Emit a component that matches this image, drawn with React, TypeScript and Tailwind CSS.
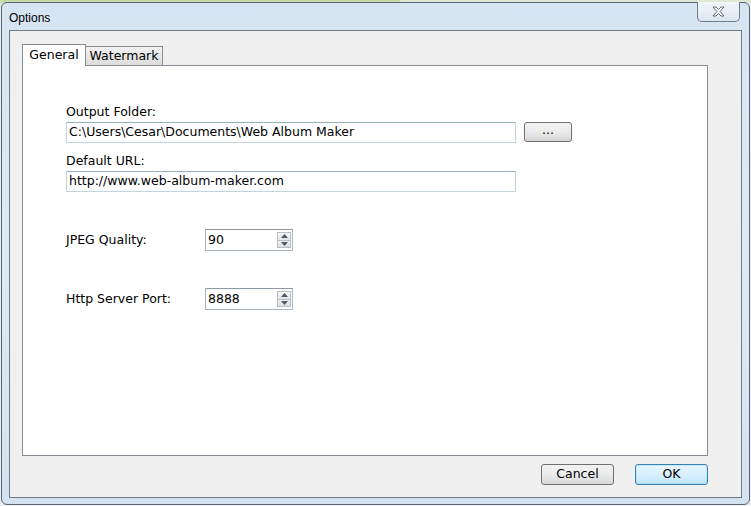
// Options dialog: General tab with folder, URL and two spin fields
const body = "font-['DejaVu_Sans',Tahoma,sans-serif] text-[12.5px] text-black";

function TextBox({ value }: { value: string }) {
  return (
    <div className="w-[450px] h-[21px] flex items-center pl-[2px] bg-white border border-[#c3d5da] border-t-[#98b0b6]">
      {value}
    </div>
  );
}

function Arrow({ up }: { up?: boolean }) {
  return (
    <svg width="7" height="4" viewBox="0 0 7 4">
      <path d={up ? "M0 4 L3.5 0 L7 4 Z" : "M0 0 L3.5 4 L7 0 Z"} fill="#4d5a66" />
    </svg>
  );
}

function SpinBox({ value }: { value: string }) {
  return (
    <div className="w-[88px] h-[22px] flex bg-white border border-[#a9b5bf] border-t-[#8d9aa6]">
      <div className="flex-1 flex items-center pl-[2px]">{value}</div>
      <div className="w-[14px] my-[2px] mr-[1px] flex flex-col border border-[#b6bfc7]">
        <div className="flex-1 flex items-center justify-center bg-gradient-to-b from-[#f7f7f7] to-[#e4e4e4] border-b border-[#b6bfc7]">
          <Arrow up />
        </div>
        <div className="flex-1 flex items-center justify-center bg-gradient-to-b from-[#f0f0f0] to-[#dedede]">
          <Arrow />
        </div>
      </div>
    </div>
  );
}

function CloseGlyph() {
  return (
    <svg width="13" height="11" viewBox="0 0 13 11">
      <path
        d="M1 1 H4 L6.5 3.5 L9 1 H12 L8 5.5 L12 10 H9 L6.5 7.5 L4 10 H1 L5 5.5 Z"
        fill="#ffffff"
        stroke="#5e6b78"
        strokeWidth="1"
        strokeLinejoin="round"
      />
    </svg>
  );
}

export default function App() {
  return (
    <div className="w-[751px] h-[506px] overflow-hidden bg-[#e9eef2] relative">
      {/* window behind the dialog peeking at the top edge */}
      <div className="h-[3px] bg-[#dfe8d2]" />
      <div className="absolute left-0 top-0 h-[9px] w-[400px] bg-gradient-to-b from-[#b4d28e] to-[#e3eed6] opacity-70" />

      <div className="absolute inset-x-[1px] top-[2px] bottom-[1px] rounded-[6px] border border-[#5a6673] bg-gradient-to-b from-[#d6e5f3] via-[#dfeaf5] to-[#d3e2f0] flex flex-col px-[7px] pb-[6px]">
        {/* title bar */}
        <div className="h-[27px] flex items-start relative">
          <span className="mt-[6px] font-['Liberation_Sans',Arial,sans-serif] text-[12px] text-black">
            Options
          </span>
          <div className="absolute right-[2px] -top-[1px] w-[43px] h-[20px] flex items-center justify-center rounded-b-[5px] border border-t-0 border-[#6f7c89] bg-gradient-to-b from-[#f2f6fa] to-[#dce7f1]">
            <CloseGlyph />
          </div>
        </div>

        {/* client area */}
        <div className={`flex-1 flex flex-col border border-[#6f7b87] bg-[#f0f0f0] pl-[12px] pr-[33px] pt-[13px] ${body}`}>
          {/* tabs */}
          <div className="flex items-end h-[22px] relative z-10">
            <div className="h-[22px] w-[64px] flex items-start justify-center pt-[1px] bg-white border border-b-0 border-[#898c95]">
              General
            </div>
            <div className="h-[19px] w-[78px] flex items-center justify-center -ml-[1px] mb-[1px] bg-gradient-to-b from-[#f2f2f2] to-[#dcdcdc] border border-b-0 border-[#898c95]">
              Watermark
            </div>
          </div>

          {/* tab page */}
          <div className="-mt-[1px] h-[391px] bg-white border border-[#898c95] pl-[43px] pt-[38px] flex flex-col">
            <div className="h-[15px] leading-[15px]">Output Folder:</div>
            <div className="mt-[3px] flex items-start">
              <TextBox value="C:\Users\Cesar\Documents\Web Album Maker" />
              <div className="ml-[8px] w-[48px] h-[20px] flex items-center justify-center rounded-[3px] border border-[#707070] bg-gradient-to-b from-[#f3f3f3] via-[#ebebeb] to-[#d6d6d6] pb-[3px]">
                ...
              </div>
            </div>
            <div className="mt-[10px] h-[15px] leading-[15px]">Default URL:</div>
            <div className="mt-[3px]">
              <TextBox value="http://www.web-album-maker.com" />
            </div>

            <div className="mt-[37px] flex items-center">
              <div className="w-[139px]">JPEG Quality:</div>
              <SpinBox value="90" />
            </div>
            <div className="mt-[37px] flex items-center">
              <div className="w-[139px]">Http Server Port:</div>
              <SpinBox value="8888" />
            </div>
          </div>

          {/* dialog buttons */}
          <div className="mt-[8px] flex justify-end gap-[21px]">
            <div className="w-[73px] h-[21px] flex items-center justify-center rounded-[3px] border border-[#707070] bg-gradient-to-b from-[#f2f2f2] via-[#ebebeb] to-[#d8d8d8]">
              Cancel
            </div>
            <div className="w-[73px] h-[21px] flex items-center justify-center rounded-[3px] border border-[#3c7fb1] bg-gradient-to-b from-[#eaf6fd] via-[#d9f0fc] to-[#bee6fd] shadow-[inset_0_0_0_1px_#48d3ff40]">
              OK
            </div>
          </div>
        </div>
      </div>
    </div>
  );
}
